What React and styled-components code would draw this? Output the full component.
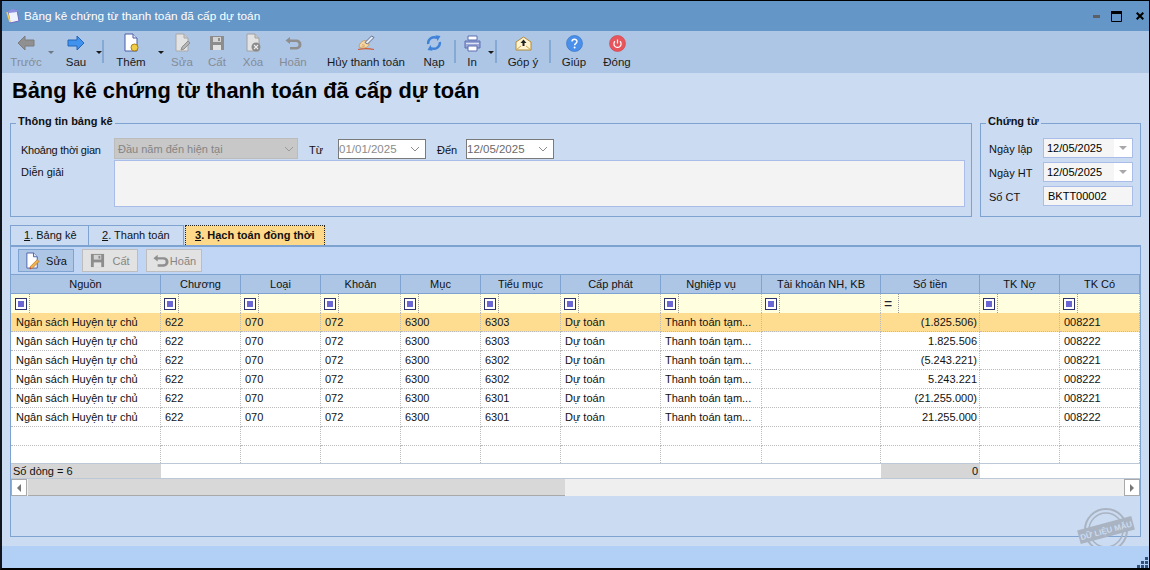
import styled, { createGlobalStyle } from "styled-components";

const COLS = "150px 80px 80px 80px 80px 80px 100px 101px 119px 99px 80px 80px";

const GlobalStyle = createGlobalStyle`
  html, body {
    margin: 0;
    padding: 0;
    background: #000;
  }
  * {
    box-sizing: border-box;
  }
`;

const Win = styled.div`
  width: 1150px;
  height: 570px;
  overflow: hidden;
  display: flex;
  flex-direction: column;
  border-top: 1px solid #000;
  border-left: 2px solid #10141c;
  border-right: 1px solid #000;
  border-bottom: 2px solid #000;
  font-family: "Liberation Sans", Arial, sans-serif;
  font-size: 11px;
  color: #111;
  background: #cbdbf1;
`;

const TitleBar = styled.div`
  height: 30px;
  flex: none;
  display: flex;
  align-items: center;
  background: #6496c7;
  color: #fff;
  padding-left: 4px;
`;

const TitleText = styled.span`
  margin-left: 4px;
  font-size: 11.8px;
  flex: 1;
`;

const WinButtons = styled.div`
  display: flex;
  align-items: center;
  gap: 11px;
  padding-right: 5px;
`;

const CloseGlyph = styled.svg`
  margin-left: 3px;
`;

const Toolbar = styled.div`
  height: 42px;
  flex: none;
  display: flex;
  background: #adc6e6;
  padding-left: 4px;
  font-size: 11.5px;
`;

const ToolItem = styled.div`
  width: ${(p) => p.$w}px;
  flex: none;
  display: flex;
  flex-direction: column;
  align-items: center;
  padding-top: 3px;
  white-space: nowrap;
  color: ${(p) => (p.$off ? "#858b94" : "#1a1a1a")};
`;

const ToolIcon = styled.div`
  height: 18px;
  display: flex;
  align-items: center;
  justify-content: center;
`;

const ToolLabel = styled.span`
  margin-top: 3px;
  line-height: 15px;
`;

const ToolCaret = styled.div`
  width: ${(p) => p.$w}px;
  flex: none;
  margin-top: 20px;
  height: 4px;
  display: flex;
  justify-content: center;

  &::before {
    content: "";
    flex: none;
    width: 0;
    height: 0;
    border-left: 3px solid transparent;
    border-right: 3px solid transparent;
    border-top: 3px solid ${(p) => (p.$off ? "#6f7782" : "#1a1a1a")};
  }
`;

const ToolSep = styled.div`
  width: 2px;
  flex: none;
  height: 23px;
  margin-top: 9px;
  margin-left: ${(p) => p.$ml || 0}px;
  background: #86a9d4;
`;

const Main = styled.div`
  flex: 1;
  display: flex;
  flex-direction: column;
  padding: 0 8px;
`;

const Heading = styled.h1`
  height: 50px;
  margin: 0;
  padding: 4px 0 0 2px;
  font-size: 21.8px;
  line-height: 27px;
  font-weight: 700;
  color: #000;
`;

const Groups = styled.div`
  display: flex;
  gap: 8px;
`;

const Group = styled.div`
  position: relative;
  width: ${(p) => p.$w}px;
  height: 94px;
  border: 1px solid #7fa3d1;
  padding: 14px 0 0 ${(p) => p.$pl}px;
`;

const Legend = styled.span`
  position: absolute;
  top: -10px;
  left: 5px;
  padding: 0 2px;
  background: #cbdbf1;
  font-weight: 700;
  line-height: 14px;
`;

const FieldRow = styled.div`
  display: flex;
  align-items: center;
  height: ${(p) => p.$h}px;
  margin-bottom: ${(p) => p.$mb || 0}px;
`;

const FieldLabel = styled.span`
  width: ${(p) => p.$w}px;
  flex: none;
  align-self: ${(p) => (p.$top ? "flex-start" : "center")};
  padding-top: ${(p) => (p.$top ? 6 : 2)}px;
  padding-left: ${(p) => p.$pl || 0}px;
  letter-spacing: ${(p) => (p.$tight ? "-0.25px" : "normal")};
  white-space: nowrap;
`;

const DisabledSelect = styled.div`
  width: 184px;
  height: 21px;
  flex: none;
  display: flex;
  align-items: center;
  justify-content: space-between;
  padding: 0 3px;
  background: #c8c8c8;
  border: 1px solid #bcbcbc;
  color: #858585;
`;

const DateBox = styled.div`
  width: 88px;
  height: 20px;
  flex: none;
  display: flex;
  align-items: center;
  justify-content: space-between;
  padding: 0 5px 0 0;
  background: #fff;
  border: 1px solid #7a7a7a;
  font-size: 11.5px;
  color: ${(p) => p.$color};
`;

const Memo = styled.div`
  width: 851px;
  height: 47px;
  flex: none;
  background: #f3f3f3;
  border: 1px solid #a9bde8;
`;

const ValueBox = styled.div`
  width: 90px;
  height: 20px;
  flex: none;
  display: flex;
  align-items: stretch;
  background: #f5f5f5;
  border: 1px solid #a9bde8;
  color: #000;
`;

const ValueText = styled.span`
  flex: 1;
  padding-left: ${(p) => p.$pl}px;
  line-height: 18px;
`;

const ValueArrow = styled.span`
  width: 18px;
  background: #fff;
  display: flex;
  align-items: center;
  justify-content: center;

  &::before {
    content: "";
    width: 0;
    height: 0;
    border-left: 4px solid transparent;
    border-right: 4px solid transparent;
    border-top: 4px solid #a8a8a8;
  }
`;

const Tabs = styled.div`
  display: flex;
  margin-top: 8px;
  height: 20px;
`;

const Tab = styled.div`
  width: ${(p) => p.$w}px;
  flex: none;
  height: 20px;
  border: 1px solid #7fa3d1;
  border-left-width: ${(p) => (p.$first ? 1 : 0)}px;
  border-bottom: none;
  padding-left: ${(p) => p.$pl}px;
  line-height: 18px;
  white-space: nowrap;
`;

const ActiveTab = styled.div`
  width: 140px;
  flex: none;
  margin-left: 1px;
  height: 20px;
  border: 1px dotted #222;
  border-bottom: none;
  background: #fed98a;
  padding-left: 9px;
  line-height: 18px;
  font-weight: 700;
  white-space: nowrap;
`;

const Panel = styled.div`
  position: relative;
  height: 292px;
  border: 1px solid #7fa3d1;
  border-top-width: 2px;
  display: flex;
  flex-direction: column;
`;

const SubBar = styled.div`
  height: 27px;
  flex: none;
  display: flex;
  align-items: flex-start;
  gap: 8px;
  padding: 2px 0 0 7px;
  background: #c1d6f5;
`;

const SubButton = styled.div`
  width: 56px;
  height: 23px;
  display: flex;
  align-items: center;
  justify-content: center;
  gap: ${(p) => p.$gap}px;
  background: ${(p) => (p.$off ? "#e2e2e2" : "#adc6e6")};
  border: 1px solid ${(p) => (p.$off ? "#bdbdbd" : "#7fa3d1")};
  color: ${(p) => (p.$off ? "#858585" : "#111")};
`;

const GridRow = styled.div`
  display: grid;
  grid-template-columns: ${COLS};
  height: ${(p) => p.$h}px;
  flex: none;
  background: ${(p) => p.$bg};
`;

const HeadCell = styled.div`
  display: flex;
  align-items: center;
  justify-content: center;
  background: #adc6e6;
  border-top: 1px solid #7fa3d1;
  border-bottom: 1px solid #7fa3d1;
  border-right: 1px solid #7fa3d1;
`;

const FilterCell = styled.div`
  display: flex;
  align-items: center;
  background: #ffffe0;
  border-right: 1px dotted #bbb;
`;

const FilterTag = styled.div`
  width: 18px;
  height: 100%;
  flex: none;
  display: flex;
  align-items: center;
  padding-left: 3px;
  border-right: 1px dotted #999;
  font-size: 14px;
  color: #223;

  ${FilterCell}:first-child & {
    width: 19px;
    padding-left: 4px;
  }
`;

const FilterBox = styled.span`
  width: 12px;
  height: 12px;
  border: 1px solid #2e3372;
  background: #fff;
  padding: 2px;
  display: block;

  &::before {
    content: "";
    display: block;
    width: 6px;
    height: 6px;
    background: #6a66d2;
  }
`;

const GridBody = styled.div`
  height: 150px;
  flex: none;
  overflow: hidden;
  background: #fff;
`;

const Cell = styled.div`
  display: flex;
  align-items: center;
  justify-content: ${(p) => (p.$right ? "flex-end" : "flex-start")};
  padding: ${(p) => (p.$right ? "0 2px 0 0" : "0 0 0 4px")};
  border-right: 1px dotted #bbb;
  border-bottom: 1px dotted #bbb;
  white-space: nowrap;
  overflow: hidden;

  &:first-child {
    padding-left: 5px;
  }
`;

const FootRow = styled.div`
  display: grid;
  grid-template-columns: ${COLS};
  height: 16px;
  flex: none;
  background: #fff;
  border-top: 1px solid #bcc8d6;
  border-bottom: 1px solid #bcc8d6;
`;

const FootCell = styled.div`
  grid-column: span ${(p) => p.$span};
  display: flex;
  align-items: center;
  justify-content: ${(p) => (p.$right ? "flex-end" : "flex-start")};
  padding: ${(p) => (p.$right ? "0 2px 0 0" : "0 0 0 2px")};
  background: ${(p) => (p.$grey ? "#d6d6d6" : "#fff")};
`;

const ScrollBar = styled.div`
  height: 17px;
  flex: none;
  display: flex;
  background: #efefef;
`;

const ScrollBtn = styled.div`
  width: 16px;
  flex: none;
  background: #fff;
  border: 1px solid #a9a9a9;
  display: flex;
  align-items: center;
  justify-content: center;

  &::before {
    content: "";
    width: 0;
    height: 0;
    border-top: 4px solid transparent;
    border-bottom: 4px solid transparent;
    ${(p) => (p.$right ? "border-left: 4px solid #777;" : "border-right: 4px solid #777;")}
  }
`;

const ScrollThumb = styled.div`
  width: 537px;
  flex: none;
  margin-left: 1px;
  background: #d8d8d8;
  border-bottom: 1px solid #a9a9a9;
`;

const ScrollTrack = styled.div`
  flex: 1;
`;

const Stamp = styled.svg`
  position: absolute;
  right: 5px;
  bottom: -18px;
`;

const StatusBar = styled.div`
  position: relative;
  height: 22px;
  flex: none;
  background: #b2d0f5;
`;

const Grip = styled.svg`
  position: absolute;
  right: 1px;
  bottom: 0;
`;

const ArrowIcon = ({ dir, fill, stroke }) => (
  <svg width="18" height="16" viewBox="0 0 18 16">
    <path
      d={dir === "left" ? "M1 8 8 1v4h9v6H8v4z" : "M17 8 10 1v4H1v6h9v4z"}
      fill={fill}
      stroke={stroke}
    />
  </svg>
);

const PageShape = ({ stroke, fill }) => (
  <path d="M3 1h8l4 4v13H3z" fill={fill} stroke={stroke} />
);

const NewIcon = () => (
  <svg width="18" height="20" viewBox="0 0 18 20">
    <PageShape stroke="#4a5ea8" fill="#fff" />
    <path d="M11 1v4h4" fill="#dfe6f5" stroke="#4a5ea8" />
    <circle cx="12.5" cy="14.5" r="3.5" fill="#f3cc45" stroke="#a57f1c" />
  </svg>
);

const EditOffIcon = () => (
  <svg width="18" height="20" viewBox="0 0 18 20">
    <PageShape stroke="#a9a9a9" fill="#e3e3e3" />
    <path d="M11 1v4h4" fill="#ccc" stroke="#a9a9a9" />
    <path d="M8 17l1-3 6-6 2 2-6 6z" fill="#b5b5b5" stroke="#8f8f8f" />
  </svg>
);

const FloppyIcon = ({ size = 16 }) => (
  <svg width={size} height={size} viewBox="0 0 16 16">
    <path d="M1 1h14v14H1z" fill="#8d8d8d" />
    <path d="M4 2h8v5H4z" fill="#d4d4d4" />
    <path d="M4 10h8v5H4z" fill="#e2e2e2" />
    <path d="M9 3h2v3H9z" fill="#8d8d8d" />
  </svg>
);

const DeleteOffIcon = () => (
  <svg width="18" height="20" viewBox="0 0 18 20">
    <PageShape stroke="#a2a2a2" fill="#e3e3e3" />
    <path d="M11 1v4h4" fill="#ccc" stroke="#a2a2a2" />
    <circle cx="12" cy="14" r="4.5" fill="#8b8b8b" />
    <path d="M10 12l4 4M14 12l-4 4" stroke="#eee" strokeWidth="1.2" />
  </svg>
);

const UndoIcon = ({ size = 18 }) => (
  <svg width={size} height={size} viewBox="0 0 18 18">
    <path
      d="M6 3 1.5 6.5 6 10V8h6a2.5 2.5 0 0 1 0 5H6v2.5h6.5a5 5 0 0 0 0-10H6z"
      fill="#8f8f8f"
    />
  </svg>
);

const SignIcon = () => (
  <svg width="18" height="16" viewBox="0 0 18 16">
    <path d="M1 14.5c5-1 11-1 16 0" stroke="#cf5a35" strokeWidth="1.2" fill="none" />
    <path d="M2 12c0-3 2-5 5-6.5l3 .5 2 2.5c0 2.5-2 4-4.5 4.5-2 .2-4.500 0-5.500-1z" fill="#f6d6a2" stroke="#c08f4e" strokeWidth=".7" />
    <path d="M8 7.5 14.5 1 17 2.5 10.5 9z" fill="#e7edf8" stroke="#44506e" strokeWidth=".8" />
    <path d="M5 9.5l3 1M4.5 11l3 .8" stroke="#c08f4e" strokeWidth=".6" />
  </svg>
);

const ReloadIcon = () => (
  <svg width="16" height="16" viewBox="0 0 16 16">
    <path d="M2.2 9A6 6 0 0 1 11 3" fill="none" stroke="#3f82d8" strokeWidth="2.4" />
    <path d="M9.5 .2 14.5 1 11.5 6z" fill="#3f82d8" />
    <path d="M13.8 7A6 6 0 0 1 5 13" fill="none" stroke="#3f82d8" strokeWidth="2.4" />
    <path d="M6.5 15.8 1.5 15 4.5 10z" fill="#3f82d8" />
  </svg>
);

const PrinterIcon = () => (
  <svg width="17" height="17" viewBox="0 0 17 17">
    <path d="M4 1h9v4H4z" fill="#fff" stroke="#5d6fb0" />
    <path d="M1 6h15v7H1z" fill="#9aa6d8" stroke="#5d6fb0" />
    <path d="M4 11h9v5H4z" fill="#fff" stroke="#5d6fb0" />
    <path d="M2 8.5h13" stroke="#dfe4f5" />
  </svg>
);

const MailIcon = () => (
  <svg width="17" height="15" viewBox="0 0 17 15">
    <path d="M1 6 8.5 1 16 6v8H1z" fill="#fff4cf" stroke="#b08a3a" />
    <path d="M1 14l5-4M16 14l-5-4" stroke="#c9a558" fill="none" />
    <path d="M8.5 3.5 11.5 7H9.5v3h-2V7h-2z" fill="#222" />
  </svg>
);

const HelpIcon = () => (
  <svg width="17" height="17" viewBox="0 0 17 17">
    <circle cx="8.5" cy="8.5" r="8" fill="#4a90ea" stroke="#2d6fc4" strokeWidth=".6" />
    <path d="M6 6.5C6 3.6 11 3.6 11 6.4c0 2-2.4 1.9-2.4 3.9" stroke="#fff" strokeWidth="1.4" fill="none" />
    <circle cx="8.6" cy="12.6" r="1" fill="#fff" />
  </svg>
);

const PowerIcon = () => (
  <svg width="17" height="17" viewBox="0 0 17 17">
    <circle cx="8.5" cy="8.5" r="8" fill="#e8555c" stroke="#c9434a" strokeWidth=".6" />
    <path d="M6 6.2a3.6 3.6 0 1 0 5 0" stroke="#fff" strokeWidth="1.2" fill="none" />
    <path d="M8.5 4.5v4" stroke="#fff" strokeWidth="1.2" />
  </svg>
);

const PencilPageIcon = () => (
  <svg width="16" height="18" viewBox="0 0 17 19">
    <path d="M2 1h7l4 4v12H2z" fill="#fff" stroke="#4a5ea8" />
    <path d="M9 1v4h4" fill="#dfe6f5" stroke="#4a5ea8" />
    <path d="M5 18l1-3 7-7 2 2-7 7z" fill="#f0b24a" stroke="#b5702a" strokeWidth=".7" />
    <path d="M5 18l.6-1.8 1.2 1.2z" fill="#c33" />
  </svg>
);

const AppIcon = () => (
  <svg width="14" height="16" viewBox="0 0 14 16">
    <path d="M2 3 11 2l2 11-9 2z" fill="#eef1ff" stroke="#6b6fc0" />
    <path d="M2 3 6 1l6 1-1 2-8 1z" fill="#8d8fe0" />
    <path d="M1 4l3 10" stroke="#f3cf55" strokeWidth="1.5" />
  </svg>
);

const Chevron = ({ color }) => (
  <svg width="10" height="6" viewBox="0 0 10 6">
    <path d="M1 1l4 4 4-4" stroke={color} fill="none" />
  </svg>
);

const headers = [
  "Nguồn", "Chương", "Loại", "Khoản", "Mục", "Tiểu mục", "Cấp phát",
  "Nghiệp vụ", "Tài khoản NH, KB", "Số tiền", "TK Nợ", "TK Có",
];

const rows = [
  ["6303", "(1.825.506)", "008221"],
  ["6303", "1.825.506", "008222"],
  ["6302", "(5.243.221)", "008221"],
  ["6302", "5.243.221", "008222"],
  ["6301", "(21.255.000)", "008221"],
  ["6301", "21.255.000", "008222"],
];

const DataRow = ({ row, selected }) => (
  <GridRow $h={19} $bg={selected ? "#fedd91" : "#fff"}>
    <Cell>Ngân sách Huyện tự chủ</Cell>
    <Cell>622</Cell>
    <Cell>070</Cell>
    <Cell>072</Cell>
    <Cell>6300</Cell>
    <Cell>{row[0]}</Cell>
    <Cell>Dự toán</Cell>
    <Cell>Thanh toán tạm...</Cell>
    <Cell />
    <Cell $right>{row[1]}</Cell>
    <Cell />
    <Cell>{row[2]}</Cell>
  </GridRow>
);

const EmptyRow = () => (
  <GridRow $h={19} $bg="#fff">
    {headers.map((h) => (
      <Cell key={h} />
    ))}
  </GridRow>
);

export default function App() {
  return (
    <>
      <GlobalStyle />
      <Win>
        <TitleBar>
          <AppIcon />
          <TitleText>Bảng kê chứng từ thanh toán đã cấp dự toán</TitleText>
          <WinButtons>
            <svg width="7" height="3" viewBox="0 0 7 3">
              <path d="M0 0h7v3H0z" fill="#5b5f66" />
            </svg>
            <svg width="11" height="11" viewBox="0 0 11 11">
              <path d="M.5.5h10v10H.5z" fill="none" stroke="#000" />
              <path d="M0 0h11v3H0z" fill="#000" />
            </svg>
            <CloseGlyph width="8" height="8" viewBox="0 0 8 8">
              <path d="M.7.7l6.6 6.6M7.3.7.7 7.3" stroke="#000" strokeWidth="2" />
            </CloseGlyph>
          </WinButtons>
        </TitleBar>

        <Toolbar>
          <ToolItem $w={40} $off>
            <ToolIcon><ArrowIcon dir="left" fill="#909090" stroke="#7c7c7c" /></ToolIcon>
            <ToolLabel>Trước</ToolLabel>
          </ToolItem>
          <ToolCaret $w={10} $off />
          <ToolItem $w={40}>
            <ToolIcon><ArrowIcon dir="right" fill="#3f93ee" stroke="#2566b8" /></ToolIcon>
            <ToolLabel>Sau</ToolLabel>
          </ToolItem>
          <ToolCaret $w={6} />
          <ToolSep />
          <ToolItem $w={54}>
            <ToolIcon><NewIcon /></ToolIcon>
            <ToolLabel>Thêm</ToolLabel>
          </ToolItem>
          <ToolCaret $w={6} />
          <ToolItem $w={36} $off>
            <ToolIcon><EditOffIcon /></ToolIcon>
            <ToolLabel>Sửa</ToolLabel>
          </ToolItem>
          <ToolItem $w={34} $off>
            <ToolIcon><FloppyIcon /></ToolIcon>
            <ToolLabel>Cất</ToolLabel>
          </ToolItem>
          <ToolItem $w={38} $off>
            <ToolIcon><DeleteOffIcon /></ToolIcon>
            <ToolLabel>Xóa</ToolLabel>
          </ToolItem>
          <ToolItem $w={42} $off>
            <ToolIcon><UndoIcon /></ToolIcon>
            <ToolLabel>Hoãn</ToolLabel>
          </ToolItem>
          <ToolItem $w={104}>
            <ToolIcon><SignIcon /></ToolIcon>
            <ToolLabel>Hủy thanh toán</ToolLabel>
          </ToolItem>
          <ToolItem $w={32}>
            <ToolIcon><ReloadIcon /></ToolIcon>
            <ToolLabel>Nạp</ToolLabel>
          </ToolItem>
          <ToolSep $ml={4} />
          <ToolItem $w={32}>
            <ToolIcon><PrinterIcon /></ToolIcon>
            <ToolLabel>In</ToolLabel>
          </ToolItem>
          <ToolCaret $w={6} />
          <ToolSep $ml={1} />
          <ToolItem $w={52}>
            <ToolIcon><MailIcon /></ToolIcon>
            <ToolLabel>Góp ý</ToolLabel>
          </ToolItem>
          <ToolSep />
          <ToolItem $w={46}>
            <ToolIcon><HelpIcon /></ToolIcon>
            <ToolLabel>Giúp</ToolLabel>
          </ToolItem>
          <ToolItem $w={40}>
            <ToolIcon><PowerIcon /></ToolIcon>
            <ToolLabel>Đóng</ToolLabel>
          </ToolItem>
        </Toolbar>

        <Main>
          <Heading>Bảng kê chứng từ thanh toán đã cấp dự toán</Heading>

          <Groups>
            <Group $w={962} $pl={10}>
              <Legend>Thông tin bảng kê</Legend>
              <FieldRow $h={21} $mb={1}>
                <FieldLabel $w={93} $tight>Khoảng thời gian</FieldLabel>
                <DisabledSelect>
                  Đầu năm đến hiện tại
                  <Chevron color="#9a9a9a" />
                </DisabledSelect>
                <FieldLabel $w={40} $pl={11}>Từ</FieldLabel>
                <DateBox $color="#8b8b8b">
                  01/01/2025
                  <Chevron color="#8a8a8a" />
                </DateBox>
                <FieldLabel $w={40} $pl={11}>Đến</FieldLabel>
                <DateBox $color="#6a6a6a">
                  12/05/2025
                  <Chevron color="#8a8a8a" />
                </DateBox>
              </FieldRow>
              <FieldRow $h={47}>
                <FieldLabel $w={93} $top>Diễn giải</FieldLabel>
                <Memo />
              </FieldRow>
            </Group>
            <Group $w={161} $pl={8}>
              <Legend>Chứng từ</Legend>
              <FieldRow $h={20} $mb={4}>
                <FieldLabel $w={54}>Ngày lập</FieldLabel>
                <ValueBox>
                  <ValueText $pl={3}>12/05/2025</ValueText>
                  <ValueArrow />
                </ValueBox>
              </FieldRow>
              <FieldRow $h={20} $mb={4}>
                <FieldLabel $w={54}>Ngày HT</FieldLabel>
                <ValueBox>
                  <ValueText $pl={3}>12/05/2025</ValueText>
                  <ValueArrow />
                </ValueBox>
              </FieldRow>
              <FieldRow $h={20}>
                <FieldLabel $w={54}>Số CT</FieldLabel>
                <ValueBox>
                  <ValueText $pl={4}>BKTT00002</ValueText>
                </ValueBox>
              </FieldRow>
            </Group>
          </Groups>

          <Tabs>
            <Tab $w={79} $first $pl={13}><u>1</u>. Bảng kê</Tab>
            <Tab $w={95} $pl={13}><u>2</u>. Thanh toán</Tab>
            <ActiveTab><u>3</u>. Hạch toán đồng thời</ActiveTab>
          </Tabs>

          <Panel>
            <SubBar>
              <SubButton $gap={5}>
                <PencilPageIcon />
                Sửa
              </SubButton>
              <SubButton $off $gap={7}>
                <FloppyIcon size={15} />
                Cất
              </SubButton>
              <SubButton $off $gap={1}>
                <UndoIcon size={17} />
                Hoãn
              </SubButton>
            </SubBar>

            <GridRow $h={20}>
              {headers.map((h) => (
                <HeadCell key={h}>{h}</HeadCell>
              ))}
            </GridRow>

            <GridRow $h={19}>
              {headers.map((h) => (
                <FilterCell key={h}>
                  <FilterTag>{h === "Số tiền" ? "=" : <FilterBox />}</FilterTag>
                </FilterCell>
              ))}
            </GridRow>

            <GridBody>
              {rows.map((row, i) => (
                <DataRow key={i} row={row} selected={i === 0} />
              ))}
              <EmptyRow />
              <EmptyRow />
            </GridBody>

            <FootRow>
              <FootCell $span={1} $grey>Số dòng = 6</FootCell>
              <FootCell $span={8} />
              <FootCell $span={1} $grey $right>0</FootCell>
              <FootCell $span={2} />
            </FootRow>

            <ScrollBar>
              <ScrollBtn />
              <ScrollThumb />
              <ScrollTrack />
              <ScrollBtn $right />
            </ScrollBar>

            <Stamp width="58" height="48" viewBox="0 0 58 48">
              <circle cx="29" cy="24" r="21" fill="none" stroke="#a9b3c1" strokeWidth="2" />
              <circle cx="29" cy="24" r="17" fill="none" stroke="#a9b3c1" strokeWidth="1.5" />
              <g transform="rotate(-15 29 24)">
                <rect x="1" y="17" width="56" height="14" fill="#a9b3c1" />
                <text x="29" y="27.5" textAnchor="middle" fontSize="8" fontWeight="700" fill="#cbdbf1">
                  DỮ LIỆU MẪU
                </text>
              </g>
            </Stamp>
          </Panel>
        </Main>

        <StatusBar>
          <Grip width="11" height="11" viewBox="0 0 11 11">
            <path d="M8 0h3v3H8zM4 4h3v3H4zM8 4h3v3H8zM0 8h3v3H0zM4 8h3v3H4zM8 8h3v3H8z" fill="#33507a" />
          </Grip>
        </StatusBar>
      </Win>
    </>
  );
}
